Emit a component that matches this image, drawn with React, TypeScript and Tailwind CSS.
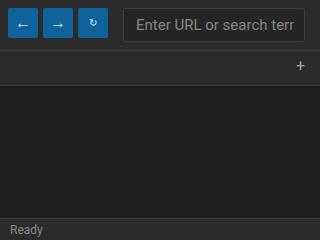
import React from "react";

export default function App() {
  return (
    <div className="w-[320px] h-[240px] flex flex-col bg-[#1e1e1e] overflow-hidden" style={{ fontFamily: 'Roboto, "Liberation Sans", Arial, sans-serif' }}>
      <div className="h-[51px] flex items-start gap-[5px] p-[8px] bg-[#2b2b2b] border-b border-[#3a3a3a] shrink-0">
        <button className="w-[30px] h-[30px] rounded-[2px] bg-[#0e639c] text-[#dfe9f2] text-[16px] leading-none flex items-center justify-center shrink-0">←</button>
        <button className="w-[30px] h-[30px] rounded-[2px] bg-[#0e639c] text-[#dfe9f2] text-[16px] leading-none flex items-center justify-center shrink-0">→</button>
        <button className="w-[30px] h-[30px] rounded-[2px] bg-[#0e639c] text-[#dfe9f2] text-[10px] leading-none flex items-center justify-center shrink-0">↻</button>
        <input
          className="ml-[10px] w-[182px] h-[34px] shrink-0 bg-[#252525] border border-[#3c3c3c] rounded-[2px] pl-[12px] pr-[10px] text-[15px] text-[#ccc] placeholder-[#858585] outline-none"
          placeholder="Enter URL or search term"
        />
      </div>
      <div className="h-[35px] flex items-center justify-end pr-[15px] pb-[5px] bg-[#2a2a2a] border-b border-[#3a3a3a] shrink-0">
        <span className="text-[#a0a0a0] text-[16px] leading-none">+</span>
      </div>
      <div className="flex-1 bg-[#1e1e1e]" />
      <div className="h-[22px] flex items-center px-[10px] bg-[#2b2b2b] border-t border-[#3a3a3a] shrink-0">
        <span className="text-[12px] text-[#8a8a8a]">Ready</span>
      </div>
    </div>
  );
}
